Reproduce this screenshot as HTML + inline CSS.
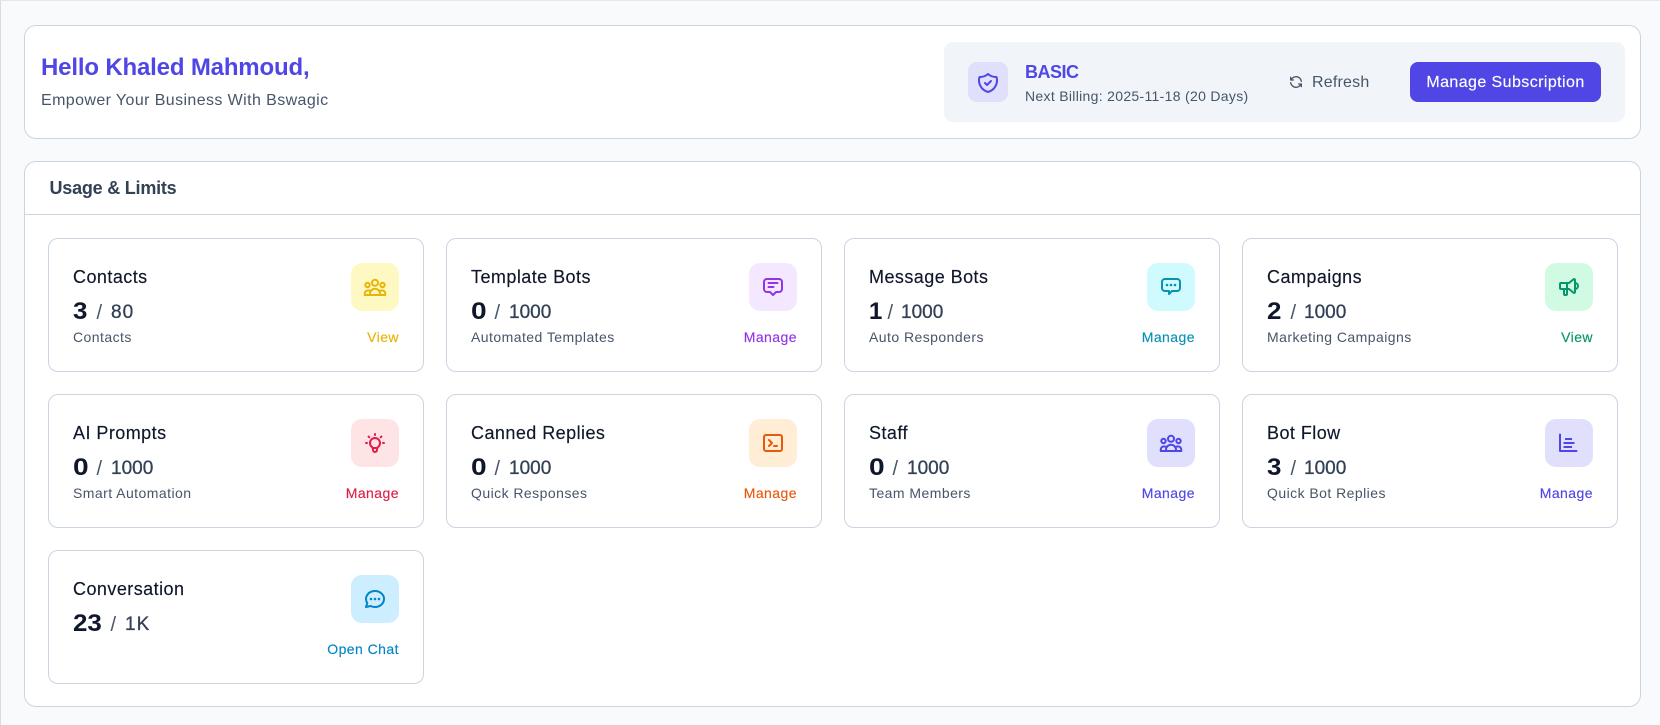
<!DOCTYPE html>
<html lang="en">
<head>
<meta charset="utf-8">
<title>Usage &amp; Limits</title>
<style>
html,body{margin:0;padding:0}
body{width:1660px;height:725px;position:relative;overflow:hidden;background:#f8fafc;font-family:"Liberation Sans",Arial,sans-serif;color:#0f172a}
.edge-l{position:absolute;left:0;top:0;width:1px;height:725px;background:#d5dde9}
.edge-t{position:absolute;left:0;top:0;width:1660px;height:1px;background:#e2e8f0}
.panel{position:absolute;box-sizing:border-box;background:#fff;border:1px solid #cbd5e1;border-radius:12px}
.hero{left:24px;top:25px;width:1617px;height:114px}
.usage{left:24px;top:161px;width:1617px;height:546px}
.t{position:absolute;white-space:nowrap}
.hello{left:16px;top:27px;font-size:24px;line-height:30px;font-weight:700;color:#4f46e5;letter-spacing:-.17px}
.tag{left:16px;top:65px;font-size:16px;line-height:20px;color:#475569;letter-spacing:.4px}
.plan{position:absolute;left:919px;top:16px;width:681px;height:80px;background:#f1f5f9;border-radius:9px}
.shield{position:absolute;left:24px;top:20px;width:40px;height:40px;border-radius:9px;background:#e0e0fc}
.shield svg{position:absolute;left:8px;top:9px}
.basic{left:81px;top:20px;font-size:18px;line-height:20px;font-weight:700;color:#4f46e5;letter-spacing:-.5px}
.bill{left:81px;top:44px;font-size:14px;line-height:20px;color:#475569;letter-spacing:.31px}
.rf-i{position:absolute;left:344px;top:32px;color:#475569}
.rf{left:368px;top:31px;font-size:16px;line-height:20px;color:#475569;letter-spacing:.2px}
.btn{position:absolute;left:466px;top:20px;width:191px;height:40px;border-radius:8px;background:#4f46e5;color:#fff;font-size:16px;line-height:42px;text-align:center;letter-spacing:.42px;-webkit-text-stroke:.15px #fff}
.head{position:absolute;left:0;top:0;right:0;height:52px;border-bottom:1px solid #cbd5e1}
.head span{left:24.5px;top:16px;font-size:18px;line-height:20px;font-weight:700;color:#334155;letter-spacing:-.22px}
.card{position:absolute;box-sizing:border-box;width:376px;height:134px;background:#fff;border:1px solid #cbd5e1;border-radius:10px}
.c1{left:48px}.c2{left:446px}.c3{left:844px}.c4{left:1242px}
.r1{top:238px}.r2{top:394px}.r3{top:550px}
.title{left:24px;top:28px;font-size:18px;line-height:20px;color:#0f172a;letter-spacing:.45px;-webkit-text-stroke:.15px #0f172a}
.num{left:24px;top:58px;font-size:24px;line-height:30px;font-weight:700;color:#0f172a;transform-origin:left center;transform:scaleX(1.08)}
.wide{transform:scaleX(1.17)}
.one{transform:none}
.sl{top:62px;font-size:20px;line-height:24px;color:#475569;margin-left:.5px}
.den{top:62px;font-size:19px;line-height:24px;color:#334155;-webkit-text-stroke:.3px #334155}
.ls{letter-spacing:1px}
.sub{left:24px;top:88px;font-size:14px;line-height:20px;color:#475569;letter-spacing:.45px}
.act{right:24px;top:88px;font-size:14px;line-height:20px;letter-spacing:.45px;-webkit-text-stroke:.15px currentColor}
.ic{position:absolute;right:24px;top:24px;width:48px;height:48px;border-radius:11px}
.ic svg{position:absolute;left:12px;top:12px}
svg{display:block;fill:none;stroke:currentColor;stroke-width:2;stroke-linecap:round;stroke-linejoin:round}
.dot{stroke-width:2.6}
.yl{color:#eab308}.yl.ic{background:#fef9c3}
.pu{color:#9333ea}.pu.ic{background:#f3e8ff}
.cy{color:#0891b2}.cy.ic{background:#cffafe}
.gr{color:#059669}.gr.ic{background:#d1fae5}
.rd{color:#e11d48}.rd.ic{background:#ffe4e6}
.or{color:#ea580c}.or.ic{background:#ffedd5}
.in{color:#4f46e5}.in.ic{background:#e0e0fc}
.sk{color:#0284c7}.sk.ic{background:#cdeeff}
</style>
</head>
<body>
<div class="edge-l"></div><div class="edge-t"></div>

<div class="panel hero">
  <span class="t hello">Hello Khaled Mahmoud,</span>
  <span class="t tag">Empower Your Business With Bswagic</span>
  <div class="plan">
    <div class="shield in"><svg width="24" height="24" viewBox="0 0 24 24"><path d="M9 12l2 2l4 -4"/><path d="M12 3a12 12 0 0 0 8.5 3a12 12 0 0 1 -8.5 15a12 12 0 0 1 -8.5 -15a12 12 0 0 0 8.5 -3"/></svg></div>
    <span class="t basic">BASIC</span>
    <span class="t bill">Next Billing: 2025-11-18 (20 Days)</span>
    <svg class="rf-i" width="16" height="16" viewBox="0 0 24 24"><path d="M20 11a8.1 8.1 0 0 0 -15.5 -2m-.5 -4v4h4"/><path d="M4 13a8.1 8.1 0 0 0 15.5 2m.5 4v-4h-4"/></svg>
    <span class="t rf">Refresh</span>
    <div class="btn">Manage Subscription</div>
  </div>
</div>

<div class="panel usage"><div class="head"><span class="t">Usage &amp; Limits</span></div></div>

<div class="card c1 r1">
  <span class="t title">Contacts</span><span class="t num">3</span><span class="t sl" style="left:47px">/</span><span class="t den ls" style="left:62px">80</span>
  <span class="t sub">Contacts</span><span class="t act yl">View</span>
  <div class="ic yl"><svg width="24" height="24" viewBox="0 0 24 24"><circle cx="12" cy="7.8" r="3"/><circle cx="4.5" cy="10" r="2.2"/><circle cx="19.5" cy="10" r="2.2"/><path d="M7 20v-1.2a5 5 0 0 1 10 0v1.2"/><path d="M1.8 20v-1.5a3 3 0 0 1 3 -3h1.6"/><path d="M22.2 20v-1.5a3 3 0 0 0 -3 -3h-1.6"/><path d="M1.8 20h20.4"/></svg></div>
</div>

<div class="card c2 r1">
  <span class="t title">Template Bots</span><span class="t num wide">0</span><span class="t sl" style="left:47px">/</span><span class="t den" style="left:62px">1000</span>
  <span class="t sub">Automated Templates</span><span class="t act pu">Manage</span>
  <div class="ic pu"><svg width="24" height="24" viewBox="0 0 24 24"><path d="M7.5 8h9"/><path d="M7.5 12h5"/><path d="M9 17h-3a3 3 0 0 1 -3 -3v-7a3 3 0 0 1 3 -3h12a3 3 0 0 1 3 3v7a3 3 0 0 1 -3 3h-3l-3 3l-3 -3z"/></svg></div>
</div>

<div class="card c3 r1">
  <span class="t title">Message Bots</span><span class="t num one">1</span><span class="t sl" style="left:42px">/</span><span class="t den" style="left:56px">1000</span>
  <span class="t sub">Auto Responders</span><span class="t act cy">Manage</span>
  <div class="ic cy"><svg width="24" height="24" viewBox="0 0 24 24"><path class="dot" d="M12 10v.01"/><path class="dot" d="M8 10v.01"/><path class="dot" d="M16 10v.01"/><path d="M18 4a3 3 0 0 1 3 3v6a3 3 0 0 1 -3 3h-5l-3 3v-3h-4a3 3 0 0 1 -3 -3v-6a3 3 0 0 1 3 -3h12z"/></svg></div>
</div>

<div class="card c4 r1">
  <span class="t title">Campaigns</span><span class="t num">2</span><span class="t sl" style="left:47px">/</span><span class="t den" style="left:61px">1000</span>
  <span class="t sub">Marketing Campaigns</span><span class="t act gr">View</span>
  <div class="ic gr"><svg width="24" height="24" viewBox="0 0 24 24"><path d="M18 8a3 3 0 0 1 0 6"/><path d="M10 8v11a1 1 0 0 1 -1 1h-1a1 1 0 0 1 -1 -1v-5"/><path d="M12 8h0l4.524 -3.77a.9 .9 0 0 1 1.476 .692v12.156a.9 .9 0 0 1 -1.476 .692l-4.524 -3.77h-8a1 1 0 0 1 -1 -1v-4a1 1 0 0 1 1 -1h8"/></svg></div>
</div>

<div class="card c1 r2">
  <span class="t title">AI Prompts</span><span class="t num wide">0</span><span class="t sl" style="left:47px">/</span><span class="t den" style="left:62px">1000</span>
  <span class="t sub">Smart Automation</span><span class="t act rd">Manage</span>
  <div class="ic rd"><svg width="24" height="24" viewBox="0 0 24 24"><path d="M3 12h1m8 -9v1m8 8h1m-15.4 -6.4l.7 .7m12.1 -.7l-.7 .7"/><path d="M9 16a5 5 0 1 1 6 0a3.5 3.5 0 0 0 -1 3a2 2 0 0 1 -4 0a3.5 3.5 0 0 0 -1 -3"/><path d="M9.7 17l4.6 0"/></svg></div>
</div>

<div class="card c2 r2">
  <span class="t title">Canned Replies</span><span class="t num wide">0</span><span class="t sl" style="left:47px">/</span><span class="t den" style="left:62px">1000</span>
  <span class="t sub">Quick Responses</span><span class="t act or">Manage</span>
  <div class="ic or"><svg width="24" height="24" viewBox="0 0 24 24"><path d="M8 9l3 3l-3 3"/><path d="M13 15l3 0"/><path d="M3 4m0 2a2 2 0 0 1 2 -2h14a2 2 0 0 1 2 2v12a2 2 0 0 1 -2 2h-14a2 2 0 0 1 -2 -2z"/></svg></div>
</div>

<div class="card c3 r2">
  <span class="t title">Staff</span><span class="t num wide">0</span><span class="t sl" style="left:47px">/</span><span class="t den" style="left:62px">1000</span>
  <span class="t sub">Team Members</span><span class="t act in">Manage</span>
  <div class="ic in"><svg width="24" height="24" viewBox="0 0 24 24"><circle cx="12" cy="7.8" r="3"/><circle cx="4.5" cy="10" r="2.2"/><circle cx="19.5" cy="10" r="2.2"/><path d="M7 20v-1.2a5 5 0 0 1 10 0v1.2"/><path d="M1.8 20v-1.5a3 3 0 0 1 3 -3h1.6"/><path d="M22.2 20v-1.5a3 3 0 0 0 -3 -3h-1.6"/><path d="M1.8 20h20.4"/></svg></div>
</div>

<div class="card c4 r2">
  <span class="t title">Bot Flow</span><span class="t num">3</span><span class="t sl" style="left:47px">/</span><span class="t den" style="left:61px">1000</span>
  <span class="t sub">Quick Bot Replies</span><span class="t act in">Manage</span>
  <div class="ic in"><svg width="24" height="24" viewBox="0 0 24 24"><path d="M3 3.5v16.5h16.5"/><path d="M8 8h7" stroke-linecap="butt"/><path d="M6.5 12h11" stroke-linecap="butt"/><path d="M6.5 16h8.5" stroke-linecap="butt"/></svg></div>
</div>

<div class="card c1 r3">
  <span class="t title">Conversation</span><span class="t num">23</span><span class="t sl" style="left:61px">/</span><span class="t den ls" style="left:76px">1K</span>
  <span class="t act sk">Open Chat</span>
  <div class="ic sk"><svg width="24" height="24" viewBox="0 0 24 24"><path d="M3 20l1.3 -3.9a9 8 0 1 1 3.4 2.9l-4.7 1"/><path class="dot" d="M12 12v.01"/><path class="dot" d="M8 12v.01"/><path class="dot" d="M16 12v.01"/></svg></div>
</div>
</body>
</html>
